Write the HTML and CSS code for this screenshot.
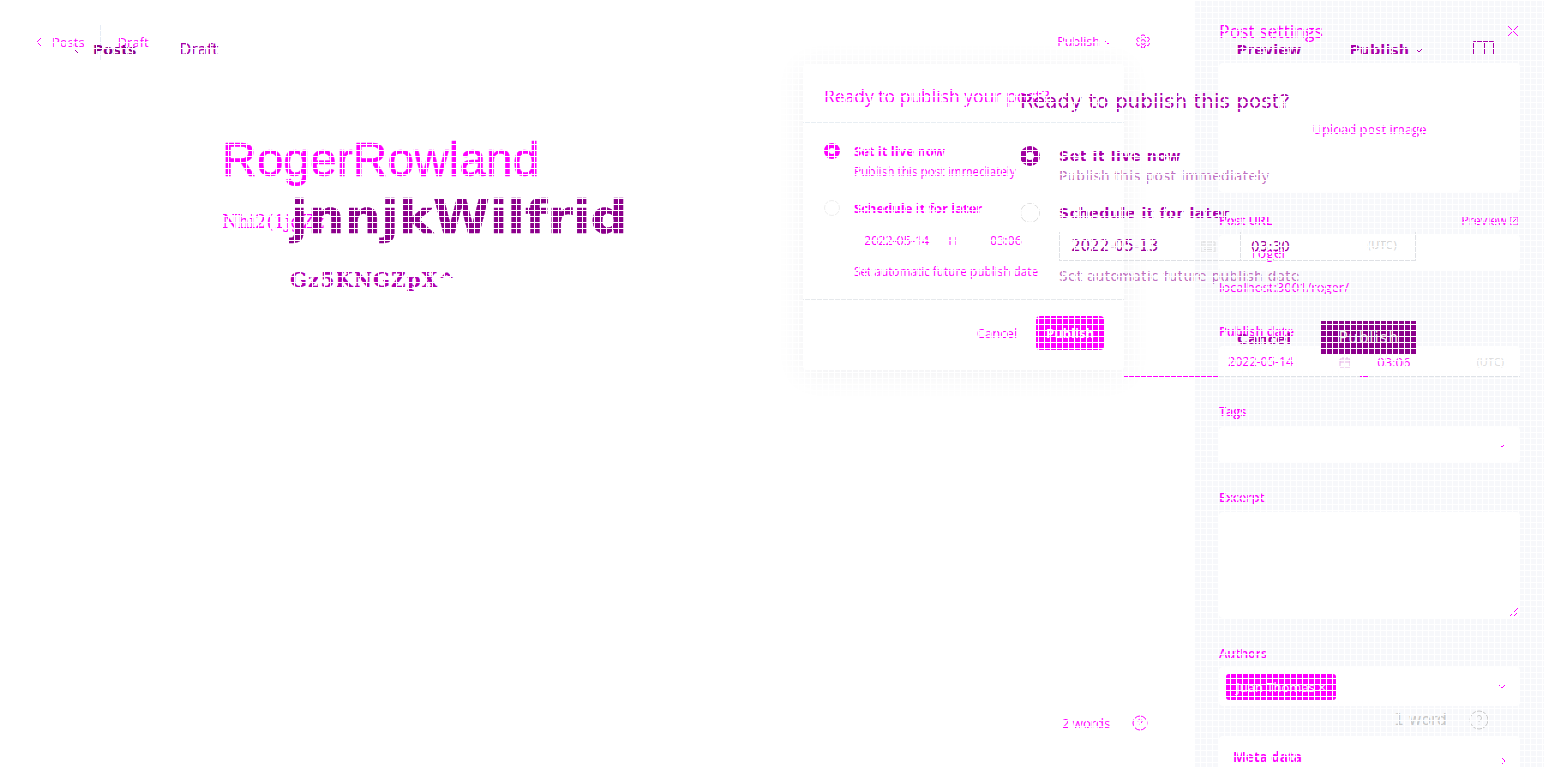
FILE: index.html
```html
<!DOCTYPE html>
<html lang="en">
<head>
<meta charset="utf-8">
<title>Post settings</title>
<link rel="stylesheet" href="styles.css">
</head>
<body>
<div class="stage">
  <div class="layer layer-a">
    <main class="a-main">
      <header class="a-head">
        <div class="a-crumbs">
          <svg class="a-back" viewBox="0 0 6 10" width="6" height="10"><path d="M5 1 1 5l4 4"/></svg>
          <span class="a-posts">Posts</span>
          <span class="a-sep"></span>
          <span>Draft</span>
        </div>
        <div class="a-actions">
          <span>Publish</span>
          <svg class="a-chev" viewBox="0 0 8 5" width="8" height="5"><path d="M1 1l3 3 3-3"/></svg>
          <svg class="a-gear" viewBox="0 0 16 16" width="16" height="16"><path d="M6.7 1h2.6l.4 2 1.6.9 1.9-.7 1.3 2.3-1.5 1.3v1.4l1.5 1.3-1.3 2.3-1.9-.7-1.6.9-.4 2H6.7l-.4-2-1.6-.9-1.9.7-1.3-2.3 1.5-1.3V7.200L1.500 5.900l1.300-2.300 1.900.7 1.600-.9z"/><circle cx="8" cy="8" r="2.400"/></svg>
        </div>
      </header>
      <div class="a-doc">
        <h1 class="a-title">RogerRowland</h1>
        <p class="a-body">Nhi2(1jgZz</p>
      </div>
      <footer class="a-foot">
        <span>2 words</span>
        <svg class="a-help" viewBox="0 0 16 16" width="16" height="16"><circle cx="8" cy="8" r="7"/><path d="M6 6.300a2 2 0 1 1 3 1.700c-.7.400-1 .8-1 1.500M8 11.500v.5"/></svg>
      </footer>
    </main>

    <aside class="a-side">
      <div class="a-side-head">
        <h2>Post settings</h2>
        <svg class="a-close" viewBox="0 0 12 12" width="12" height="12"><path d="M1 1l10 10M11 1 1 11"/></svg>
      </div>
      <div class="a-upload"><span>Upload post image</span></div>
      <div class="a-label-row a-label-url"><span>Post URL</span><span class="a-preview">Preview <svg viewBox="0 0 8 8" width="8" height="8"><path d="M0 0h8v8H0zM2 6l4-4"/></svg></span></div>
      <div class="a-input a-url"><span>roger</span></div>
      <p class="a-hint">localhost:3001/roger/</p>
      <div class="a-label a-label-date">Publish date</div>
      <div class="a-input a-date">
        <span class="a-date-val">2022-05-14</span>
        <svg class="a-cal" viewBox="0 0 12 12" width="12" height="12"><path d="M1 3h10v8H1zM1 6h10M4 1v2M8 1v2"/></svg>
        <span class="a-time">03:06</span>
        <span class="a-utc">(UTC)</span>
      </div>
      <div class="a-label a-label-tags">Tags</div>
      <div class="a-input a-tags"><svg class="a-chev" viewBox="0 0 8 5" width="8" height="5"><path d="M1 1l3 3 3-3"/></svg></div>
      <div class="a-label a-label-excerpt">Excerpt</div>
      <div class="a-input a-excerpt"><svg class="a-grip" viewBox="0 0 8 8" width="8" height="8"><path d="M0 8l8-8M4 8l4-4"/></svg></div>
      <div class="a-label a-label-authors">Authors</div>
      <div class="a-input a-authors">
        <span class="a-chip">Juan Thomas ×</span>
        <svg class="a-chev" viewBox="0 0 8 5" width="8" height="5"><path d="M1 1l3 3 3-3"/></svg>
      </div>
      <div class="a-input a-meta"><span>Meta data</span><svg class="a-chev-r" viewBox="0 0 5 8" width="5" height="8"><path d="M1 1l3 3-3 3"/></svg></div>
    </aside>

    <section class="a-pop">
      <h3>Ready to publish your post?</h3>
      <div class="a-pop-body">
        <div class="a-opt">
          <span class="a-radio a-radio-on"></span>
          <div>
            <div class="a-opt-title">Set it live now</div>
            <div class="a-opt-sub">Publish this post immediately</div>
          </div>
        </div>
        <div class="a-opt a-opt-second">
          <span class="a-radio"></span>
          <div>
            <div class="a-opt-title">Schedule it for later</div>
            <div class="a-date-row">
              <span class="a-pop-date">2022-05-14 <svg viewBox="0 0 8 8" width="8" height="8"><path d="M1 0v8M6 0v8"/></svg></span>
              <span class="a-pop-time">03:06</span>
            </div>
            <div class="a-opt-sub">Set automatic future publish date</div>
          </div>
        </div>
      </div>
      <div class="a-pop-foot">
        <span>Cancel</span>
        <span class="a-pop-btn">Publish</span>
      </div>
    </section>
  </div>

  <div class="layer layer-b">
    <header class="b-head">
      <div class="b-crumbs">
        <svg class="b-back" viewBox="0 0 6 6" width="6" height="6"><path d="M0 0l5 5"/></svg>
        <span class="b-posts">Posts</span>
        <span class="b-draft">Draft</span>
      </div>
      <div class="b-actions">
        <span class="b-strong">Preview</span>
        <span class="b-strong b-publish">Publish <svg viewBox="0 0 8 5" width="8" height="5"><path d="M1 1l3 3 3-3"/></svg></span>
        <svg class="b-panel" viewBox="0 0 21 14" width="21" height="14"><path d="M.5 14V.5h20V14M11.500.5V14"/></svg>
      </div>
    </header>
    <div class="b-doc">
      <h1 class="b-title">jnnjkWilfrid</h1>
      <p class="b-body">Gz5KNGZpX^</p>
    </div>
    <footer class="b-foot">
      <span>1 word</span>
      <svg viewBox="0 0 20 20" width="20" height="20"><circle cx="10" cy="10" r="9"/><path d="M7.500 8a2.500 2.500 0 1 1 4 2c-1 .7-1.500 1-1.500 2M10 14.500v.5"/></svg>
    </footer>
    <section class="b-pop">
      <h3>Ready to publish this post?</h3>
      <div class="b-opt">
        <span class="b-radio b-radio-on"></span>
        <div>
          <div class="b-opt-title">Set it live now</div>
          <div class="b-opt-sub">Publish this post immediately</div>
        </div>
      </div>
      <div class="b-opt b-opt-second">
        <span class="b-radio"></span>
        <div>
          <div class="b-opt-title">Schedule it for later</div>
          <div class="b-date-row">
            <span class="b-date">2022-05-13 <svg viewBox="0 0 16 14" width="16" height="14"><path d="M1 3h14v10H1zM1 6h14M4 1v3M12 1v3M4 8h8M4 10.500h8"/></svg></span>
            <span class="b-time">03:30 <span class="b-utc">(UTC)</span></span>
          </div>
          <div class="b-opt-sub">Set automatic future publish date</div>
        </div>
      </div>
      <div class="b-pop-foot">
        <span class="b-strong b-cancel">Cancel</span>
        <span class="b-pop-btn">Publish</span>
      </div>
      <span class="b-seam"></span>
      <span class="b-seam b-seam-short"></span>
    </section>
  </div>

  <div class="grid"></div>
</div>
</body>
</html>
```

FILE: styles.css
```css
* { box-sizing: border-box; }
html, body { margin: 0; padding: 0; background: #fff; }
.stage { position: relative; width: 1544px; height: 767px; overflow: hidden; font-family: "Open Sans", sans-serif; }
.layer { position: absolute; inset: 0; }
h1, h2, h3, p { margin: 0; font-weight: 400; }
svg { display: block; fill: none; stroke: currentColor; stroke-width: 1; flex: none; }

/* Layer A — pink */
.layer-a { display: flex; color: #ff00ff; font-size: 13px; line-height: 16px; }
.a-main { width: 1195px; height: 767px; display: flex; flex-direction: column; }
.a-head { height: 84px; display: flex; justify-content: space-between; align-items: center; padding: 0 44px 0 36px; }
.a-crumbs, .a-actions { display: flex; align-items: center; }
.a-actions { font-size: 12.500px; }
.a-posts { margin-left: 10px; }
.a-sep { width: 1px; height: 35px; background: #e5ecf5; margin: 0 17px 0 15px; }
.a-chev { margin-left: 4px; }
.a-gear { margin-left: 23px; }
.a-doc { padding: 48px 0 0 222px; }
.a-title { font: 400 48px/56px "Liberation Sans", sans-serif; -webkit-text-stroke: .5px #ff00ff; }
.a-body { margin-top: 22px; font: 400 18px/24px "DejaVu Serif", serif; }
.a-foot { margin-top: auto; display: flex; align-items: center; padding: 0 47px 36px 1062px; justify-content: space-between; }

.a-side { width: 349px; height: 767px; background: #f7f8fb; padding: 0 24px; display: flex; flex-direction: column; }
.a-side > * { flex: none; }
.a-side-head { height: 63px; display: flex; justify-content: space-between; align-items: flex-start; padding-top: 21px; }
.a-side-head h2 { font-size: 17.500px; line-height: 20px; }
.a-close { margin-top: 4px; margin-right: 1px; }
.a-upload { height: 129px; padding-top: 2px; background: #fff; border-radius: 4px; display: flex; align-items: center; justify-content: center; }
.a-label, .a-label-row { font-weight: 600; font-size: 12.500px; line-height: 16px; height: 16px; padding-top: 1px; }
.a-label-row { display: flex; justify-content: space-between; margin-top: 20px; }
.a-preview { font-weight: 400; display: flex; align-items: center; gap: 3px; margin-right: 2px; }
.a-input { background: #fff; border-radius: 4px; display: flex; align-items: center; padding: 0 14px; position: relative; }
.a-url { height: 36px; margin-top: 7px; padding-left: 33px; font-size: 14px; }
.a-hint { margin-top: 8px; }
.a-label-date { margin-top: 28px; }
.a-date { height: 31px; margin-top: 7px; padding-top: 2px; border-bottom: 1px solid #dfe3e8; border-radius: 4px 4px 0 0; padding-right: 16px; }
.a-date-val { margin-left: -5px; font-size: 12.500px; }
.a-cal { margin-left: 46px; color: #e4b0e4; }
.a-time { margin-left: 26px; }
.a-utc { margin-left: auto; color: #dcdcdc; font-size: 11px; }
.a-label-tags { margin-top: 26px; }
.a-tags { height: 36px; margin-top: 8px; justify-content: flex-end; }
.a-label-excerpt { margin-top: 26px; }
.a-excerpt { height: 106px; margin-top: 7px; }
.a-grip { position: absolute; right: 2px; bottom: 2px; }
.a-label-authors { margin-top: 27px; }
.a-authors { height: 39px; margin-top: 6px; padding: 0 14px 0 7px; justify-content: space-between; }
.a-chip { background: #ff00ff; color: #fff; height: 26px; width: 110px; border-radius: 3px; display: flex; align-items: center; justify-content: center; }
.a-meta { height: 60px; margin-top: 30px; align-items: flex-start; justify-content: space-between; padding-top: 13px; font-weight: 700; font-size: 13.500px; }
.a-chev-r { margin-top: 8px; }

.a-pop { position: absolute; left: 803px; top: 64px; width: 321px; height: 306px; background: #fff; border-radius: 4px; box-shadow: 0 4px 28px rgba(60,70,90,.08); display: flex; flex-direction: column; }
.a-pop h3 { font-size: 17.500px; line-height: 20px; height: 59px; padding: 22px 21px 0; border-bottom: 1px solid #e8eef3; }
.a-pop-body { flex: 1; padding: 20px 21px 0; }
.a-opt { display: flex; gap: 14px; }
.a-opt-second { margin-top: 21px; }
.a-radio { width: 16px; height: 16px; border-radius: 50%; border: 1px solid #eee; flex: none; }
.a-radio-on { border: 5px solid #ff00ff; }
.a-opt-title { font-weight: 700; }
.a-opt-sub { margin-top: 4px; font-size: 11.800px; }
.a-date-row { display: flex; gap: 10px; margin: 9px 0 6px; height: 32px; align-items: center; }
.a-pop-date { display: flex; align-items: center; gap: 20px; width: 116px; padding-left: 10px; font-size: 12.500px; }
.a-pop-time { padding-left: 10px; font-size: 12.500px; }
.a-pop-foot { height: 71px; border-top: 1px solid #e6e9ec; display: flex; justify-content: flex-end; align-items: center; gap: 19px; padding: 0 20px 5px 0; }
.a-pop-btn { background: #ff00ff; color: #fff; width: 68px; height: 34px; border-radius: 4px; display: flex; align-items: center; justify-content: center; font-weight: 700; }

/* Layer B — purple */
.layer-b { color: #a800a8; font-family: "DejaVu Sans", sans-serif; font-size: 14px; line-height: 16px; }
.b-head { height: 98px; padding: 42px 50px 0 75px; display: flex; justify-content: space-between; align-items: flex-start; }
.b-crumbs, .b-actions { display: flex; align-items: center; }
.b-back { margin-top: 6px; color: #a000a0; }
.b-posts { margin-left: 12px; font-weight: 700; color: #8b008b; }
.b-draft { margin-left: 43px; font-size: 15.500px; }
.b-strong { font-weight: 700; font-size: 14.400px; }
.b-publish { margin-left: 48px; display: flex; align-items: center; gap: 6px; }
.b-panel { margin-left: 50px; margin-top: -5px; }
.b-doc { padding: 87px 0 0 290px; }
.b-title { font: 700 51.500px/60px "DejaVu Sans", sans-serif; color: #8b008b; -webkit-text-stroke: .4px #8b008b; transform: scaleY(.9); transform-origin: 0 48px; }
.b-body { margin-top: 23px; font: 700 20px/24px "DejaVu Serif", serif; letter-spacing: 1px; color: #b000b0; }
.b-foot { position: absolute; left: 1394px; top: 710px; display: flex; align-items: center; gap: 22px; color: #c8c8c8; font-size: 15.500px; }
.b-pop { position: absolute; left: 1000px; top: 0; width: 436px; height: 377px; }
.b-pop h3 { padding: 90px 0 0 20px; font-size: 20px; line-height: 22px; color: #a800a8; }
.b-opt { display: flex; gap: 19px; padding-left: 20px; margin-top: 36px; }
.b-opt-second { margin-top: 21px; }
.b-radio { width: 20px; height: 20px; border-radius: 50%; border: 1px solid #ddd; flex: none; margin-top: -2px; }
.b-radio-on { border: 6px solid #a000a0; }
.b-opt-title { font-weight: 700; letter-spacing: .6px; }
.b-opt-sub { margin-top: 4px; color: #c070c0; letter-spacing: .4px; font-size: 13.500px; }
.b-date-row { display: flex; height: 29px; margin: 11px 0 7px; width: 357px; border-bottom: 1px solid #dfe1e5; border-left: 1px solid #dfe1e5; border-right: 1px solid #dfe1e5; }
.b-date { width: 181px; display: flex; align-items: center; padding-left: 11px; gap: 42px; border-right: 1px solid #dfe1e5; color: #9a009a; font-size: 15px; }
.b-date svg { color: #ddd; }
.b-time { display: flex; align-items: center; padding-left: 10px; gap: 77px; color: #9a009a; font-size: 13.500px; }
.b-utc { color: #d4d4d4; font-size: 11px; }
.b-pop-foot { position: absolute; top: 321px; left: 237px; display: flex; align-items: center; height: 33px; gap: 29px; }
.b-cancel { margin-top: 3px; font-size: 14.500px; }
.b-pop-btn { width: 97px; height: 33px; background: #8b008b; color: #e8e8e8; display: flex; align-items: center; justify-content: center; letter-spacing: 1px; font-size: 15px; }
.b-seam { position: absolute; left: 124px; top: 376px; width: 95px; height: 1px; background: #ff00ff; }
.b-seam-short { left: 360px; width: 8px; }

.grid { position: absolute; inset: 0; pointer-events: none; background-image: linear-gradient(to right, #fff 1px, transparent 1px), linear-gradient(to bottom, #fff 1px, transparent 1px); background-size: 6px 6px; }
```
